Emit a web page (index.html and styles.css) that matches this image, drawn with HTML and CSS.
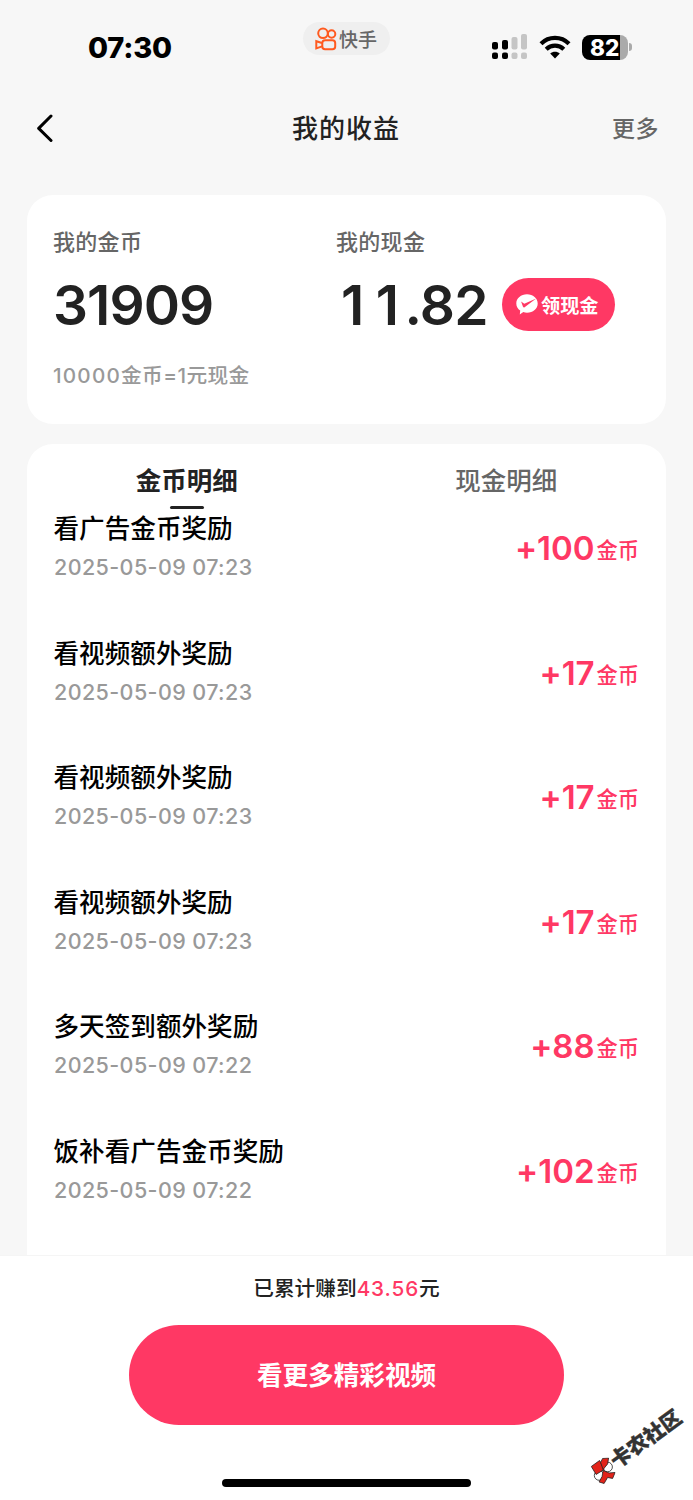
FILE: index.html
```
<!DOCTYPE html>
<html lang="zh-CN">
<head>
<meta charset="utf-8">
<title>我的收益</title>
<link rel="stylesheet" href="styles.css">
</head>
<body>
<div class="screen">
  <header class="status">
    <div class="clock">07:30</div>
    <div class="source">
      <svg class="source-logo" width="22" height="24" viewBox="0 0 22 24" fill="none" stroke="#ff5a1f" stroke-width="2"><circle cx="8" cy="6.3" r="4.8"/><circle cx="16.6" cy="7" r="3.7"/><rect x="7.3" y="13.2" width="12.9" height="9" rx="2.8"/><path d="M7 16 1.3 14.2v7.2L7 19.4"/></svg>
      <span>快手</span>
    </div>
    <div class="indicators">
      <svg width="36" height="26" viewBox="0 0 36 26"><g fill="#000"><rect x="0" y="8" width="6" height="7.5" rx="2"/><rect x="10" y="6" width="6" height="9.5" rx="2"/><rect x="0" y="18.5" width="6" height="6.5" rx="2"/><rect x="10" y="18.5" width="6" height="6.5" rx="2"/></g><g fill="#c5c5c5"><rect x="19.5" y="3" width="6" height="12.5" rx="2"/><rect x="29" y="0" width="6" height="15.5" rx="2"/><rect x="19.5" y="18.5" width="6" height="6.5" rx="2"/><rect x="29" y="18.5" width="6" height="6.5" rx="2"/></g></svg>
      <svg class="wifi" width="32" height="24" viewBox="0 0 32 24"><g fill="none" stroke="#000" stroke-width="4.2"><path d="M2 8.8C9.8 1 22.2 1 30 8.8"/><path d="M7.2 14.2c5-4.8 12.6-4.8 17.6 0"/></g><path d="M16 23.5l-4.800-4.900c2.700-2.500 6.900-2.500 9.600 0z"/></svg>
      <div class="battery"><span>82</span></div>
      <i class="battery-tip"></i>
    </div>
  </header>
  <nav class="nav">
    <svg class="back" width="18" height="28" viewBox="0 0 18 28" fill="none" stroke="#000" stroke-width="3" stroke-linecap="round" stroke-linejoin="round"><path d="M16 2 3.700 14.400 16 26.500"/></svg>
    <h1>我的收益</h1>
    <span class="more">更多</span>
  </nav>
  <section class="card balance">
    <div class="coins">
      <div class="label">我的金币</div>
      <div class="big">31909</div>
      <div class="rate"><span class="ratenum">10000</span>金币=1元现金</div>
    </div>
    <div class="cash">
      <div class="label">我的现金</div>
      <div class="cashline">
        <div class="big money"><span class="first">1</span><span class="second">1</span>.82</div>
        <div class="withdraw">
          <svg width="22" height="21" viewBox="0 0 22 21"><path fill="#fff" d="M11 .3c6 0 10.700 4 10.700 9.200S17 18.700 11 18.700q-2 0-3.700-.6L3.800 20.500l.4-3.900C1.800 15 .3 12.500.3 9.500.3 4.300 5 .3 11 .3z"/><path fill="#ff3864" d="M5.100 7.500l3.200 2.200L20.200 4.500 8.600 13.200q-1 .6-1.600-.5z"/></svg>
          <span>领现金</span>
        </div>
      </div>
    </div>
  </section>
  <main class="card details">
    <div class="tabs"><div class="active">金币明细</div><div>现金明细</div></div>
    <div class="row"><div><div class="name">看广告金币奖励</div><div class="date">2025-05-09 07:23</div></div><div class="amount">+100<span>金币</span></div></div>
    <div class="row"><div><div class="name">看视频额外奖励</div><div class="date">2025-05-09 07:23</div></div><div class="amount">+17<span>金币</span></div></div>
    <div class="row"><div><div class="name">看视频额外奖励</div><div class="date">2025-05-09 07:23</div></div><div class="amount">+17<span>金币</span></div></div>
    <div class="row"><div><div class="name">看视频额外奖励</div><div class="date">2025-05-09 07:23</div></div><div class="amount">+17<span>金币</span></div></div>
    <div class="row"><div><div class="name">多天签到额外奖励</div><div class="date">2025-05-09 07:22</div></div><div class="amount">+88<span>金币</span></div></div>
    <div class="row"><div><div class="name">饭补看广告金币奖励</div><div class="date">2025-05-09 07:22</div></div><div class="amount">+102<span>金币</span></div></div>
  </main>
  <footer class="footer">
    <div class="total">已累计赚到<b>43.56</b>元</div>
    <div class="watch">看更多精彩视频</div>
    <div class="home"></div>
  </footer>
  <div class="mark">
    <svg width="25" height="27" viewBox="0 0 25 27" stroke="#222" stroke-width=".8"><circle cx="17" cy="9.500" r="4.800" fill="#fff"/><circle cx="8.500" cy="18" r="4.800" fill="#fff"/><g fill="#e2231a"><path d="M.7 9 9 3l4.500 9-8 5z"/><path d="M10 5 12 1l6-.5-1 6-4.500 5.500z"/><path d="M12.500 13l6 2.500 6-.5-2.500 6-5-1-3.500 6-5-1.500 3-5.500z"/></g></svg>
    <span>卡农社区</span>
  </div>
</div>
</body>
</html>
```
FILE: styles.css
```
* { box-sizing: border-box; }
body { margin: 0; background: #f7f7f7; color: #222; font-family: Inter, "Noto Sans CJK SC", sans-serif; font-weight: 500; }
svg { display: block; flex: none; }
.screen { position: relative; width: 693px; height: 1500px; overflow: hidden; display: flex; flex-direction: column; }
.status { height: 78px; flex: none; display: grid; grid-template-columns: 303px 87px 1fr; }
.clock { padding: 30px 0 0 88px; font-size: 29px; line-height: 36px; font-weight: 800; letter-spacing: -.2px; color: #000; }
.source { margin-top: 22px; height: 33px; border-radius: 17px; background: #efefef; display: flex; align-items: center; padding-left: 12px; gap: 2px; font-size: 19px; color: #666; white-space: nowrap; }
.indicators { display: flex; align-items: center; height: 26px; margin: 34px 0 0 102px; }
.wifi { margin-left: 11px; }
.battery { margin-left: 11px; width: 46px; height: 25px; border-radius: 8px; background: linear-gradient(90deg, #000 38px, #aaa 38px); color: #fff; font-size: 22.500px; line-height: 25px; font-weight: 800; padding-left: 8px; }
.battery-tip { width: 3px; height: 8px; margin-left: 1px; border-radius: 0 4px 4px 0; background: #aaa; }
.nav { height: 117px; flex: none; display: grid; grid-template-columns: 100px 1fr 100px; align-items: start; padding: 0 34px 0 35px; }
.back { margin-top: 36px; }
h1 { margin: 31px 2px 0 0; font-size: 26px; line-height: 40px; letter-spacing: 1px; font-weight: 500; text-align: center; }
.more { margin-top: 31px; font-size: 23px; line-height: 40px; letter-spacing: .5px; color: #666; text-align: right; }
.card { width: 639px; margin: 0 27px; background: #fff; border-radius: 26px; }
.balance { height: 229px; flex: none; display: grid; grid-template-columns: 283px 1fr; padding: 32px 0 0 26px; }
.label { font-size: 22px; line-height: 30px; letter-spacing: .3px; color: #666; }
.big { font-size: 55px; line-height: 66px; margin-top: 15px; font-weight: 600; letter-spacing: -.9px; }
.money { width: 151px; padding-left: 5px; letter-spacing: -.8px; white-space: nowrap; }
.first { letter-spacing: 11.500px; }
.second { letter-spacing: 5.500px; }
.rate { margin-top: 23px; font-size: 20.700px; line-height: 30px; letter-spacing: .4px; color: #999; }
.ratenum { letter-spacing: 1.200px; }
.cashline { display: flex; align-items: flex-start; }
.withdraw { margin: 21px 0 0 15px; width: 113px; height: 53px; border-radius: 27px; background: #ff3864; color: #fff; display: flex; align-items: center; padding-left: 14px; gap: 3px; font-size: 19.200px; font-weight: 700; white-space: nowrap; }
.details { margin-top: 20px; height: 811px; flex: none; border-radius: 26px 26px 0 0; overflow: hidden; }
.tabs { height: 66px; display: grid; grid-template-columns: 1fr 1fr; text-align: center; font-size: 25.500px; line-height: 74px; color: #666; }
.active { color: #222; font-weight: 700; display: flex; flex-direction: column; align-items: center; }
.active::after { content: ""; width: 34px; height: 3px; flex: none; margin-top: -12px; border-radius: 2px; background: #222; }
.row { height: 124.500px; display: flex; justify-content: space-between; padding: 0 27px 0 27px; }
.name { margin-left: -.5px; font-size: 25.600px; line-height: 38px; color: #000; }
.date { font-size: 21.500px; line-height: 28px; margin-top: 5px; letter-spacing: .4px; color: #999; }
.amount { margin-top: 17px; font-size: 33px; line-height: 42px; font-weight: 600; color: #ff3864; font-feature-settings: "calt" 0; }
.amount span { position: relative; top: -2px; font-size: 21.200px; font-weight: 500; margin-left: 2px; }
.footer { height: 245px; flex: none; background: #fff; border-top: 1px solid #f5f5f5; display: flex; flex-direction: column; align-items: center; }
.total { margin-top: 18px; font-size: 20.700px; line-height: 30px; }
.total b { color: #ff3864; font-weight: 500; letter-spacing: .9px; }
.watch { margin-top: 21px; width: 435px; height: 100px; border-radius: 50px; background: #ff3864; color: #fff; font-size: 25.600px; line-height: 102px; font-weight: 700; text-align: center; }
.home { margin-top: 54px; width: 249px; height: 8px; border-radius: 4px; background: #000; }
.mark { position: absolute; left: 582px; top: 1431px; width: 112px; height: 28px; display: flex; align-items: center; transform: rotate(-36deg); color: #333; font-size: 20.500px; line-height: 28px; font-weight: 900; white-space: nowrap; }
.mark svg { transform: rotate(36deg); }
.mark span { -webkit-text-stroke: .4px #333; }
```
